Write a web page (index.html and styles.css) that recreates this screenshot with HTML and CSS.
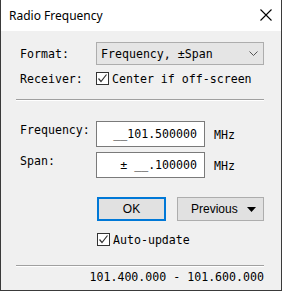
FILE: index.html
```html
<!DOCTYPE html>
<html>
<head>
<meta charset="utf-8">
<link rel="stylesheet" href="styles.css">
</head>
<body>
<div class="window">
  <div class="titlebar">
    <span class="title">Radio Frequency</span>
    <svg class="close" width="12" height="12" viewBox="0 0 12 12"><path d="M0.5 0.5 L11.5 11.5 M11.5 0.5 L0.5 11.5" stroke="#000" stroke-width="1.1" fill="none"/></svg>
  </div>
  <div class="content">
    <div class="row format-row">
      <span class="label">Format:</span>
      <div class="select">
        <span>Frequency, ±Span</span>
        <svg class="chev" width="9" height="5" viewBox="0 0 9 5"><path d="M0.5 0.5 L4.5 4.5 L8.5 0.5" stroke="#555" stroke-width="1" fill="none"/></svg>
      </div>
    </div>
    <div class="row receiver-row">
      <span class="label">Receiver:</span>
      <label class="check">
        <span class="box"><svg width="11" height="11" viewBox="0 0 11 11"><path d="M1.5 5.5 L4 8.5 L9.5 1.5" stroke="#333" stroke-width="1.2" fill="none"/></svg></span>
        <span>Center if off-screen</span>
      </label>
    </div>
    <div class="sep sep-top"></div>
    <div class="row field-row freq-row">
      <span class="label">Frequency:</span>
      <div class="input">__101.500000</div>
      <span class="unit">MHz</span>
    </div>
    <div class="row field-row span-row">
      <span class="label">Span:</span>
      <div class="input">± __.100000</div>
      <span class="unit">MHz</span>
    </div>
    <div class="buttons">
      <button class="btn ok">OK</button>
      <button class="btn prev"><span>Previous</span><svg width="9" height="5" viewBox="0 0 9 5"><path d="M0 0 L9 0 L4.5 5 Z" fill="#000"/></svg></button>
    </div>
    <label class="check auto">
      <span class="box"><svg width="11" height="11" viewBox="0 0 11 11"><path d="M1.5 5.5 L4 8.5 L9.5 1.5" stroke="#333" stroke-width="1.2" fill="none"/></svg></span>
      <span>Auto-update</span>
    </label>
    <div class="sep sep-bottom"></div>
    <div class="status">101.400.000 - 101.600.000</div>
  </div>
</div>
</body>
</html>
```
FILE: styles.css
```css
* { box-sizing: border-box; }
html, body { margin: 0; padding: 0; }
body { width: 282px; height: 291px; overflow: hidden; background: #f0f0f0; }

.window {
  width: 282px;
  height: 291px;
  border: 1px solid #3a3a3a;
  border-top: none;
  background: #f0f0f0;
  display: flex;
  flex-direction: column;
}

.titlebar {
  height: 31px;
  background: #fff;
  display: flex;
  align-items: center;
  justify-content: space-between;
  padding: 0 9px 0 8px;
  flex: none;
}
.title {
  font-family: "Noto Sans", "Open Sans", sans-serif;
  font-size: 12px;
  color: #000;
  margin-top: -1px;
}
.close { display: block; margin-top: -1px; }

.content {
  flex: 1;
  padding: 11px 17px 0 19px;
  font-family: "DejaVu Sans Mono", "Liberation Mono", monospace;
  font-size: 11.6px;
  color: #000;
  display: flex;
  flex-direction: column;
}

.row { display: flex; align-items: center; }
.label { width: 76px; flex: none; }

.select {
  width: 168px;
  height: 23px;
  border: 1px solid #adadad;
  background: #e5e5e5;
  display: flex;
  align-items: center;
  justify-content: space-between;
  padding: 0 5px 0 4px;
}
.chev { display: block; }

.receiver-row { margin-top: 7px; height: 13px; }
.check { display: flex; align-items: center; }
.box {
  width: 13px;
  height: 13px;
  border: 1px solid #333;
  background: #fff;
  display: flex;
  align-items: center;
  justify-content: center;
  margin-right: 3px;
  flex: none;
}
.box svg { display: block; }

.sep {
  height: 2px;
  border-top: 1px solid #a0a0a0;
  border-bottom: 1px solid #fff;
  width: 248px;
  margin-left: -4px;
}
.sep-top { margin-top: 14px; }

.field-row { align-items: flex-start; }
.field-row .label { padding-top: 2px; }
.freq-row { margin-top: 20px; }
.span-row { margin-top: 4px; }
.input {
  width: 109px;
  height: 26px;
  border: 1px solid #7a7a7a;
  background: #fff;
  text-align: right;
  padding: 0 7px 0 0;
  line-height: 24px;
  flex: none;
  white-space: pre;
}
.unit { margin-left: 9px; line-height: 26px; padding-top: 1px; }

.buttons {
  display: flex;
  margin-top: 18px;
  padding-left: 77px;
  gap: 11px;
}
.btn {
  height: 24px;
  background: #e1e1e1;
  border: 1px solid #adadad;
  font-family: "Liberation Sans", Arial, sans-serif;
  font-size: 12px;
  color: #000;
  padding: 0;
  margin: 0;
}
.ok {
  width: 69px;
  border: 2px solid #0078d7;
}
.prev {
  width: 87px;
  display: flex;
  align-items: center;
  justify-content: space-between;
  padding: 0 7px 0 13px;
}
.prev svg { display: block; }

.auto { margin-top: 12px; margin-left: 77px; height: 13px; }

.sep-bottom { margin-top: 19px; }

.status {
  text-align: right;
  margin-top: 1px;
  line-height: 18px;
}
```
